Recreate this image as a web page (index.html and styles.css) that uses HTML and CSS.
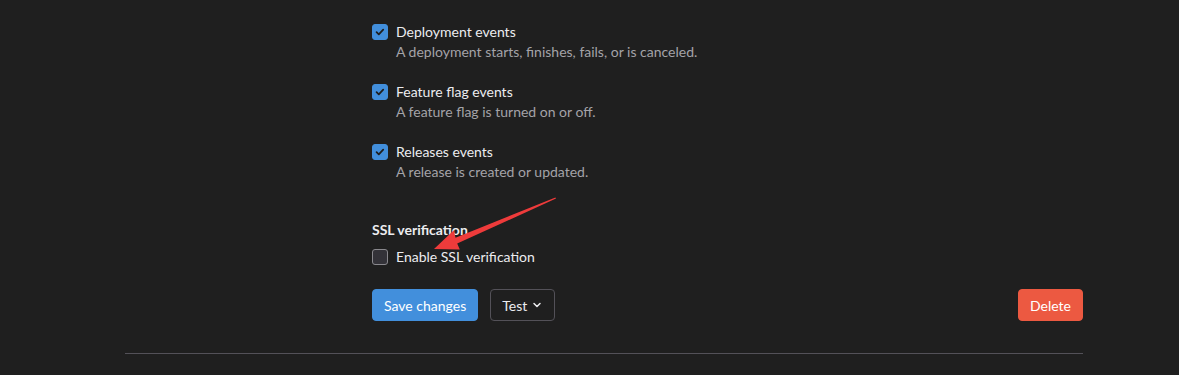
FILE: index.html
```html
<!DOCTYPE html>
<html lang="en">
<head>
    <meta charset="UTF-8">
    <meta name="viewport" content="width=device-width, initial-scale=1.0">
    <title>Webhook settings</title>
    <link rel="stylesheet" href="styles.css">
</head>
<body>
    <div class="settings">
        <div class="settings-grid">
            <div class="settings-side"></div>
            <div class="settings-main">

                <!-- Trigger events -->
                <div class="event">
                    <label class="check-row">
                        <span class="checkbox checked">
                            <svg viewBox="0 0 16 16" width="16" height="16"><path d="M4.6 8.2l2.2 2.1 4.4-4.6" fill="none" stroke="#1f1f1f" stroke-width="1.8" stroke-linecap="round" stroke-linejoin="round"/></svg>
                        </span>
                        <span class="check-label">Deployment events</span>
                    </label>
                    <p class="help">A deployment starts, finishes, fails, or is canceled.</p>
                </div>

                <div class="event">
                    <label class="check-row">
                        <span class="checkbox checked">
                            <svg viewBox="0 0 16 16" width="16" height="16"><path d="M4.6 8.2l2.2 2.1 4.4-4.6" fill="none" stroke="#1f1f1f" stroke-width="1.8" stroke-linecap="round" stroke-linejoin="round"/></svg>
                        </span>
                        <span class="check-label">Feature flag events</span>
                    </label>
                    <p class="help">A feature flag is turned on or off.</p>
                </div>

                <div class="event">
                    <label class="check-row">
                        <span class="checkbox checked">
                            <svg viewBox="0 0 16 16" width="16" height="16"><path d="M4.6 8.2l2.2 2.1 4.4-4.6" fill="none" stroke="#1f1f1f" stroke-width="1.8" stroke-linecap="round" stroke-linejoin="round"/></svg>
                        </span>
                        <span class="check-label">Releases events</span>
                    </label>
                    <p class="help">A release is created or updated.</p>
                </div>

                <!-- SSL -->
                <h4 class="section-title">SSL verification</h4>
                <label class="check-row">
                    <span class="checkbox"></span>
                    <span class="check-label">Enable SSL verification</span>
                </label>

                <!-- Actions -->
                <div class="actions">
                    <button class="btn btn-primary">Save changes</button>
                    <button class="btn btn-default">Test
                        <svg viewBox="0 0 16 16" width="12" height="12"><path d="M4 6l4 4 4-4" fill="none" stroke="#ececef" stroke-width="2" stroke-linecap="round" stroke-linejoin="round"/></svg>
                    </button>
                    <button class="btn btn-danger">Delete</button>
                </div>
            </div>
        </div>
        <hr class="divider">
    </div>

    <!-- annotation arrow -->
    <svg class="annotation" width="1179" height="375" viewBox="0 0 1179 375">
        <polygon fill="#ee3b3b" points="556,198.6 457.2,243.6 459.8,249.4 434,249 453.8,230.2 455.5,237.8 555.4,197.4"/>
    </svg>
</body>
</html>
```

FILE: styles.css
```css
body {
    margin: 0;
    background-color: #1f1f1f;
    color: #ececef;
    font-family: Lato, 'Noto Sans', sans-serif;
    font-size: 14px;
    line-height: 20px;
}

.settings {
    margin-left: 125px;
    width: 958px;
    padding-top: 22px;
}

.settings-grid {
    display: grid;
    grid-template-columns: 247px 1fr;
}

.event {
    margin-bottom: 20px;
}

.check-row {
    display: flex;
    align-items: center;
    gap: 8px;
    height: 20px;
}

.checkbox {
    width: 14px;
    height: 14px;
    border: 1px solid #89888d;
    border-radius: 3px;
    background-color: #333238;
    display: flex;
    align-items: center;
    justify-content: center;
}

.checkbox.checked {
    background-color: #428fdc;
    border-color: #428fdc;
}

.checkbox svg {
    flex-shrink: 0;
}

.check-label {
    color: #ececef;
}

.help {
    margin: 0 0 0 24px;
    color: #a4a3a8;
}

.section-title {
    margin: 38px 0 7px;
    font-size: 14px;
    font-weight: 700;
    line-height: 20px;
}

.actions {
    display: flex;
    align-items: center;
    gap: 12px;
    margin-top: 22px;
}

.btn {
    height: 32px;
    padding: 0 11px;
    border-radius: 4px;
    border: 1px solid transparent;
    font-family: inherit;
    font-size: 14px;
    color: #fff;
    display: flex;
    align-items: center;
    gap: 4px;
    cursor: pointer;
}

.btn-primary {
    background-color: #428fdc;
    border-color: #428fdc;
}

.btn-default {
    background-color: #1f1f1f;
    border-color: #535158;
    color: #ececef;
}

.btn-danger {
    margin-left: auto;
    background-color: #ec5941;
    border-color: #ec5941;
}

.divider {
    margin: 32px 0 0;
    border: none;
    border-top: 1px solid #535158;
}

.annotation {
    position: absolute;
    left: 0;
    top: 0;
    pointer-events: none;
}
```
